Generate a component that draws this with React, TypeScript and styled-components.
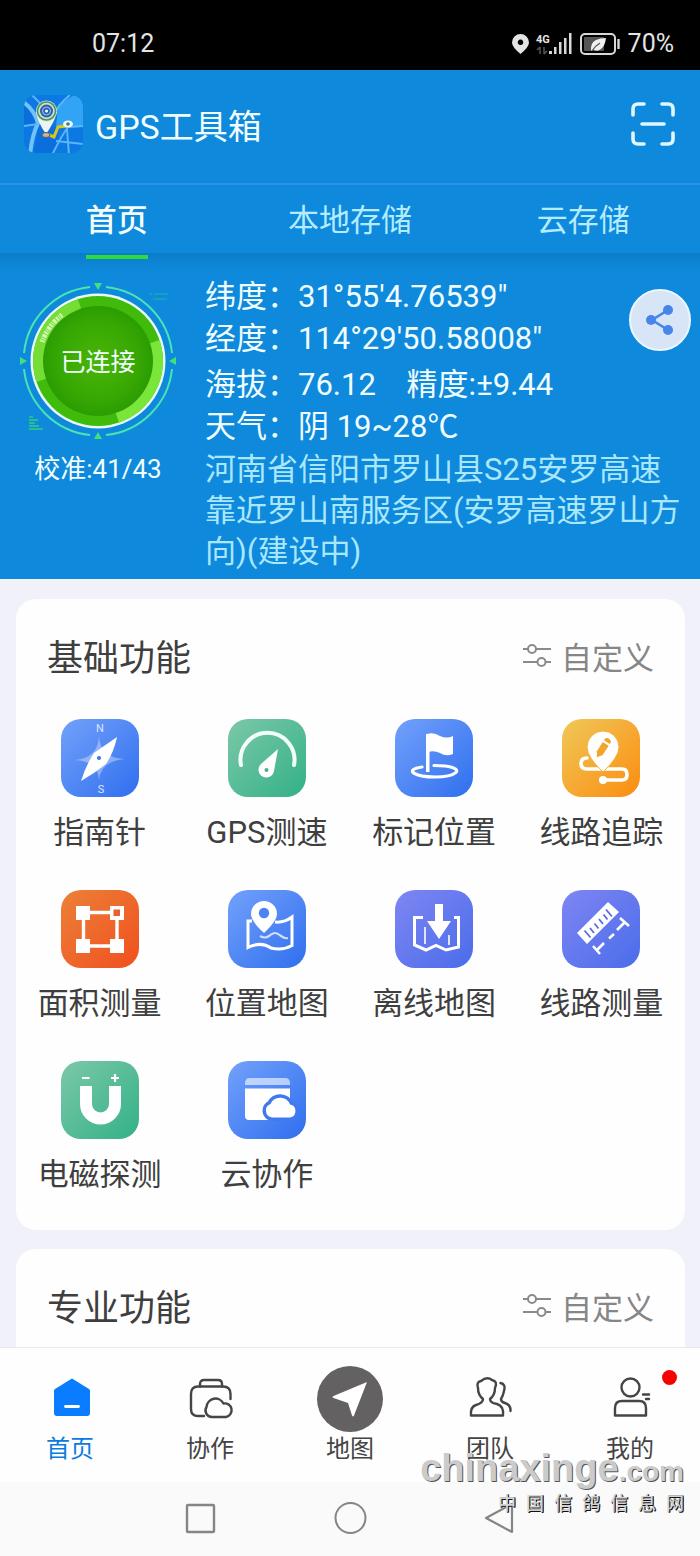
import React from "react";
import styled, { createGlobalStyle } from "styled-components";

const GlobalStyle = createGlobalStyle`
  * { box-sizing: border-box; }
  body {
    margin: 0;
    background: #f1f2f9;
    font-family: Roboto, "Noto Sans CJK SC", sans-serif;
    color: #3f3f3f;
  }
  button {
    border: 0;
    padding: 0;
    background: none;
    font: inherit;
    color: inherit;
    cursor: pointer;
  }
  a { color: inherit; text-decoration: none; }
  svg { display: block; overflow: visible; }
`;

const Screen = styled.div`
  position: relative;
  display: flex;
  flex-direction: column;
  min-height: 100vh;
`;

/* ---------- status bar ---------- */

const StatusBar = styled.div`
  display: flex;
  align-items: center;
  justify-content: space-between;
  height: 70px;
  padding: 18px 26px 0 92px;
  background: #000;
  color: #e4e4e4;
  font-size: 25px;
  line-height: 32px;
`;

const StatusIcons = styled.div`
  display: flex;
  align-items: center;
  gap: 8px;
`;

/* ---------- header ---------- */

const Header = styled.header`
  display: flex;
  align-items: center;
  gap: 12px;
  height: 115px;
  padding: 0 25px 6px 24px;
  background: #0e89db;
  border-bottom: 2px solid #2a93e4;
  color: #f0fdff;
`;

const AppTitle = styled.h1`
  flex: 1;
  margin: 0;
  padding-top: 6px;
  font-size: 34px;
  font-weight: 400;
  line-height: 44px;
`;

const Tabs = styled.nav`
  position: relative;
  display: grid;
  grid-template-columns: repeat(3, 1fr);
  height: 68px;
  background: #0e89db;
`;

const Tab = styled.a<{ $active?: boolean }>`
  position: relative;
  justify-self: center;
  padding-top: 14px;
  font-size: 31px;
  line-height: 44px;
  font-weight: ${(p) => (p.$active ? 500 : 400)};
  color: ${(p) => (p.$active ? "#f2feff" : "#b4ecff")};
  &::after {
    content: "";
    display: ${(p) => (p.$active ? "block" : "none")};
    position: absolute;
    left: 0;
    right: 0;
    bottom: -6px;
    height: 4px;
    background: #2edb3c;
  }
`;

/* ---------- position panel ---------- */

const Position = styled.section`
  display: flex;
  gap: 9px;
  padding-bottom: 7px;
  background: linear-gradient(#0a7dc9, #0e87d8 14px, #0e89db 22px);
  color: #f0fdff;
`;

const Connection = styled.div`
  display: flex;
  flex: none;
  flex-direction: column;
  align-items: center;
  gap: 12px;
  width: 196px;
  padding-top: 28px;
  font-size: 26px;
  line-height: 32px;
`;

const GaugeButton = styled.button`
  display: grid;
  place-items: center;
  > * { grid-area: 1 / 1; }
`;

const GaugeLabel = styled.span`
  padding-top: 4px;
  font-size: 25px;
`;

const Readings = styled.div`
  flex: 1;
  padding-top: 23px;
  font-size: 31px;
`;

const ReadingsTop = styled.div`
  display: flex;
  align-items: flex-start;
  justify-content: space-between;
  padding-right: 9px;
`;

const ReadingList = styled.dl`
  display: flex;
  flex-direction: column;
  margin: 0;
`;

const Reading = styled.div<{ $spaced?: boolean }>`
  display: flex;
  margin-top: ${(p) => (p.$spaced ? 4 : 0)}px;
  line-height: 42px;
  white-space: pre;
  dt, dd { margin: 0; }
`;

const ShareButton = styled.button`
  display: grid;
  place-items: center;
  width: 62px;
  height: 62px;
  margin-top: 13px;
  border: 2px solid #eaf7ff;
  border-radius: 50%;
  background: #d7e5f6;
`;

const Address = styled.p`
  margin: 1px 14px 0 0;
  line-height: 41px;
  color: #a9e7fd;
`;

/* ---------- feature cards ---------- */

const Main = styled.main`
  display: flex;
  flex: 1;
  flex-direction: column;
  gap: 19px;
  padding: 20px 15px 0 16px;
`;

const Card = styled.section<{ $last?: boolean }>`
  flex: ${(p) => (p.$last ? 1 : "none")};
  padding: 38px 0 ${(p) => (p.$last ? 15 : 34)}px;
  border-radius: ${(p) => (p.$last ? "20px 20px 0 0" : "20px")};
  background: #fefefe;
`;

const CardHead = styled.div`
  display: flex;
  align-items: center;
  justify-content: space-between;
  padding: 0 31px;
`;

const CardTitle = styled.h2`
  margin: 0;
  font-size: 36px;
  font-weight: 400;
  line-height: 44px;
`;

const Customize = styled.button`
  display: flex;
  align-items: center;
  gap: 10px;
  font-size: 31px;
  line-height: 44px;
  color: #868686;
  svg { margin-bottom: 8px; }
`;

const FeatureGrid = styled.div`
  display: grid;
  grid-template-columns: repeat(4, 1fr);
  row-gap: 36px;
  margin-top: 38px;
`;

const Feature = styled.a`
  display: flex;
  flex-direction: column;
  align-items: center;
  gap: 14px;
  font-size: 31px;
  line-height: 43px;
  white-space: nowrap;
`;

const Tile = styled.span<{ $from: string; $to: string }>`
  width: 78px;
  height: 78px;
  border-radius: 20px;
  background: linear-gradient(135deg, ${(p) => p.$from}, ${(p) => p.$to});
`;

/* ---------- bottom bars ---------- */

const BottomNav = styled.nav`
  display: grid;
  grid-template-columns: repeat(5, 1fr);
  padding: 18px 0 16px;
  border-top: 1px solid #e9e9ea;
  background: #fefefe;
`;

const NavItem = styled.a<{ $active?: boolean }>`
  position: relative;
  display: flex;
  flex-direction: column;
  align-items: center;
  font-size: 24px;
  line-height: 34px;
  color: ${(p) => (p.$active ? "#0a7be0" : "#444")};
`;

const NavIcon = styled.span`
  display: grid;
  place-items: center;
  height: 66px;
`;

const Dot = styled.span`
  position: absolute;
  top: 4px;
  left: calc(50% + 32px);
  width: 15px;
  height: 15px;
  border-radius: 50%;
  background: #f80000;
`;

const SystemBar = styled.div`
  display: flex;
  align-items: center;
  justify-content: center;
  gap: 118px;
  height: 74px;
  padding-bottom: 2px;
  background: #fafafa;
  button { width: 32px; height: 32px; }
`;

const Watermark = styled.div`
  position: absolute;
  right: 16px;
  bottom: 40px;
  display: flex;
  flex-direction: column;
  align-items: flex-end;
  font-family: "Liberation Sans", "Noto Sans CJK SC", sans-serif;
  color: #cbcbcb;
  pointer-events: none;
`;

const SiteName = styled.span<{ $small?: boolean }>`
  font-size: ${(p) => (p.$small ? 28 : 38)}px;
  line-height: 40px;
  font-weight: 700;
  text-shadow: 1px 1px 0 #555;
`;

const SiteCaption = styled.span`
  font-size: 18px;
  line-height: 24px;
  font-weight: 500;
  white-space: pre;
  color: #d4d4d4;
  text-shadow: 1px 1px 0 #111, 1px 0 0 #333;
`;

/* ---------- drawings ---------- */

const AppLogo = () => (
  <svg width="59" height="58" viewBox="0 0 59 58" aria-hidden="true">
    <defs>
      <clipPath id="logoClip"><rect width="59" height="58" rx="12" /></clipPath>
    </defs>
    <g clipPath="url(#logoClip)">
      <rect width="59" height="58" fill="#0b78e4" />
      <path d="M34 10 L50 0 H59 V32 L32 33Z" fill="#31a4f6" />
      <path d="M0 6 L15 30 L10 58 H30 L36 32 L0 30Z" fill="#0a6fdc" />
      <path d="M-2 6 Q10 14 14 28 Q8 40 6 60" stroke="#72c2f8" strokeWidth="4" fill="none" />
      <path d="M8 0 L16 8 M46 0 Q36 8 32 16 M0 31 L14 29 M60 31 L44 32 Q38 40 28 60 M43 34 L45 60 M32 46 L60 49" stroke="#5db5f6" strokeWidth="2" fill="none" />
      <path d="M23 39 L30 42 L34 32 L43 31" stroke="#d8c51e" strokeWidth="3" fill="none" />
    </g>
    <path d="M12 17 Q14 28 22 39 Q30 28 33 17Z" fill="#eef4f4" />
    <circle cx="22.500" cy="16" r="10.500" fill="#cfe3c4" />
    <circle cx="22.500" cy="16" r="9" fill="none" stroke="#4a8f5c" strokeWidth="1.500" />
    <circle cx="22.500" cy="16" r="6.500" fill="#2a62b4" />
    <circle cx="22.500" cy="16" r="4" fill="none" stroke="#a8c8ee" strokeWidth="1" />
    <circle cx="22.500" cy="16" r="1.500" fill="#fff" />
    <ellipse cx="22" cy="40" rx="4" ry="2.500" fill="#b9b7ae" stroke="#605a58" />
    <ellipse cx="44" cy="29" rx="5" ry="3.500" fill="#eef6f6" />
    <circle cx="44" cy="29" r="1.800" fill="#3c7a84" />
  </svg>
);

const ScanIcon = () => (
  <svg width="44" height="44" viewBox="0 0 44 44" fill="none" stroke="#dff8ff" strokeWidth="3.600" strokeLinecap="round" aria-hidden="true">
    <path d="M2 13V7q0-5 5-5h6M31 2h6q5 0 5 5v6M42 31v6q0 5-5 5h-6M13 42H7q-5 0-5-5v-6M11 22h22" />
  </svg>
);

const Gauge = () => (
  <svg width="160" height="160" viewBox="-80 -80 160 160" aria-hidden="true">
    <defs>
      <radialGradient id="core">
        <stop offset="0" stopColor="#4ab507" />
        <stop offset="0.700" stopColor="#37a803" />
        <stop offset="1" stopColor="#2b9d02" />
      </radialGradient>
    </defs>
    <g fill="none" stroke="#4be3b4" strokeWidth="2">
      <path d="M8 -74A74 74 0 0 1 74 -8M74 8A74 74 0 0 1 8 74M-8 74A74 74 0 0 1 -74 8M-74 -8A74 74 0 0 1 -8 -74" />
    </g>
    <path d="M-4 -78h8l-4 7zM-4 78h8l-4 -7zM-78 -4v8l7 -4zM78 -4v8l-7 -4z" fill="#42e07c" />
    <circle r="67.500" fill="#e6fbf6" />
    <circle cy="0" r="65" fill="#40bb0c" />
    <path d="M-20 -61.800A65 65 0 0 0 -61.500 21L-50 17A53 53 0 0 1 -16 -50Z" fill="#75dd35" />
    <path d="M61.500 -21A65 65 0 0 1 21 61.500L17 50A53 53 0 0 0 50 -17Z" fill="#7ae63a" />
    <circle r="55" fill="url(#core)" />
    <path d="M-56 -19A59 59 0 0 1 -36 -46" fill="none" stroke="#d3f7b4" strokeWidth="5" strokeDasharray="2 1 1 1 3 1" />
    <g stroke="#21b79c" strokeWidth="1">
      <path d="M51 -67h3m2 0h14M55 -62h14M-69 59h9M-69 62h5M-69 65h10M-69 68h9" />
    </g>
    <path d="M-69 56h4M-69 59h9M-69 62h6M-69 65h10M-69 68h14" stroke="#2cc88a" strokeWidth="1.400" />
  </svg>
);

const ShareIcon = () => (
  <svg width="28" height="30" viewBox="0 0 28 30" fill="#4786e8" stroke="#4786e8" strokeWidth="2.600" aria-hidden="true">
    <path d="M22 5L6 15l16 10" fill="none" />
    <g stroke="none">
      <circle cx="22" cy="5" r="5" />
      <circle cx="5" cy="15" r="5" />
      <circle cx="22" cy="25" r="5" />
    </g>
  </svg>
);

const SlidersIcon = () => (
  <svg width="28" height="22" viewBox="0 0 28 22" fill="none" stroke="#8a8a8a" strokeWidth="2" aria-hidden="true">
    <path d="M0 5h5M13 5h15M0 18h14M23 18h5" />
    <circle cx="9" cy="5" r="4" />
    <circle cx="18.500" cy="18" r="4" />
  </svg>
);

const glyphs = {
  compass: (
    <>
      <path d="M38 17Q39 39 64 40Q39 42 38 62Q37 42 14 41Q37 39 38 17Z" fill="#fff" opacity="0.350" />
      <path d="M56 18Q53 33 45 45Q34 54 20 62Q25 46 33 34Q43 27 56 18Z" fill="#fff" />
      <circle cx="38" cy="39" r="2" fill="#3a74e0" />
      <g fill="#dbe8ff" fontSize="11" textAnchor="middle">
        <text x="39" y="13">N</text>
        <text x="40" y="74">S</text>
      </g>
    </>
  ),
  speed: (
    <>
      <path d="M13 46A27 27 0 1 1 66 46" fill="none" stroke="#f3fffa" strokeWidth="4" strokeLinecap="round" />
      <path d="M50 30L46 52A7.800 7.800 0 1 1 33 45Z" fill="#fff" />
      <circle cx="38.500" cy="51" r="2" fill="#43b28f" />
    </>
  ),
  flag: (
    <>
      <path d="M27 48C8 51 20 58 40 58S72 50 50 47L39 46.500" fill="none" stroke="#fff" strokeWidth="3.200" strokeLinecap="round" />
      <path d="M31 15h3.500v38H31z" fill="#fff" />
      <path d="M32 15Q39 13 45 17Q52 20 58 17V35Q51 38 45 34Q39 31 33 33Z" fill="#fff" />
    </>
  ),
  route: (
    <>
      <path d="M25 39Q19 39 19 44.500T25 50H60Q65 50 65 55.500T60 61H42" fill="none" stroke="#fff" strokeWidth="3.600" strokeLinecap="round" />
      <circle cx="41" cy="61" r="4" fill="#fff" />
      <path d="M41 53Q25 38 25 28A16 16 0 0 1 57 28Q57 38 41 53Z" fill="#fff" stroke="#f6b030" strokeWidth="1" />
      <g transform="translate(41 29) rotate(33)" fill="#f0a52d">
        <path d="M-3.500 -5h7v11l-3.500 5l-3.500 -5z" />
        <path d="M-3.500 -7v-1q0 -3 3.500 -3t3.500 3v1z" />
      </g>
    </>
  ),
  area: (
    <>
      <path d="M22.500 22.500H56V56H22.500Z" fill="none" stroke="#fff" strokeWidth="3.400" />
      <path d="M15 16h14v14H15zM49 16h14v14H49zM15 49h14v14H15zM49 49h14v14H49z" fill="#fff" />
      <path d="M52.500 19.500h6.500v6.500h-6.500z" fill="#e8632c" />
    </>
  ),
  map: (
    <>
      <path d="M24 31H20V57.500Q33 51 43 58Q54 61 64 55.500V27Q56 33 47 32" fill="none" stroke="#fff" strokeWidth="3" />
      <path d="M32 46Q37 49 41 46T47 43T53 46T60 48" fill="none" stroke="#fff" strokeWidth="2.200" opacity="0.750" />
      <path d="M36 43Q23 31 23 24A13 13 0 0 1 49 24Q49 31 36 43Z" fill="#fff" />
      <circle cx="36" cy="23" r="5.200" fill="#4c83f4" />
    </>
  ),
  offline: (
    <>
      <path d="M28 27.500H19.500V55L31 60L41 55.500L51 60L63.500 57V27.500H59" fill="none" stroke="#fff" strokeWidth="3" />
      <path d="M30 37V54M54 45V55" stroke="#fff" strokeWidth="1.600" />
      <path d="M40 14h8v17h8L44 49L32 31h8z" fill="#fff" />
    </>
  ),
  ruler: (
    <>
      <path d="M46 12L57 22L25 54L15 43Z" fill="#fff" />
      <path d="M22.500 40.500l6 7M28 38l4 5M32.500 33.500l4 5M37 29l4 5M41.500 24.500l4 5M44 19.500l6 7" stroke="#5a69e2" strokeWidth="1.800" />
      <path d="M35 60L42 53M47 48.500L52 44M55 40L62 33M58 28L67 36M31 56L38 64" stroke="#fff" strokeWidth="2.600" />
    </>
  ),
  magnet: (
    <>
      <path d="M25 25V43A14.500 14.500 0 0 0 54 43V25" fill="none" stroke="#fff" strokeWidth="12" />
      <path d="M21 17h7.500M50 17h8M54 13v8" stroke="#fff" strokeWidth="2.200" />
    </>
  ),
  cloud: (
    <>
      <path d="M17 24v-2q0-5 5-5h35q5 0 5 5v2z" fill="#fff" opacity="0.600" />
      <path d="M17 27.500H62V59H21Q17 59 17 55Z" fill="#fff" />
      <path d="M44 56.500a7 7 0 0 1 -1.500 -13.500a10.500 10.500 0 0 1 19.500 0.500a6.600 6.600 0 0 1 0 13z" fill="#fff" stroke="#4079f0" strokeWidth="7" />
      <path d="M44 56.500a7 7 0 0 1 -1.500 -13.500a10.500 10.500 0 0 1 19.500 0.500a6.600 6.600 0 0 1 0 13z" fill="#fff" />
    </>
  ),
};

const palettes = {
  blue: ["#73a1fb", "#2f6fee"],
  green: ["#7cc8a8", "#33b187"],
  yellow: ["#f0c858", "#fb8c10"],
  orange: ["#ec8038", "#f0501f"],
  violet: ["#7f86f3", "#4a6cea"],
};

const features: { label: string; glyph: keyof typeof glyphs; palette: keyof typeof palettes }[] = [
  { label: "指南针", glyph: "compass", palette: "blue" },
  { label: "GPS测速", glyph: "speed", palette: "green" },
  { label: "标记位置", glyph: "flag", palette: "blue" },
  { label: "线路追踪", glyph: "route", palette: "yellow" },
  { label: "面积测量", glyph: "area", palette: "orange" },
  { label: "位置地图", glyph: "map", palette: "blue" },
  { label: "离线地图", glyph: "offline", palette: "violet" },
  { label: "线路测量", glyph: "ruler", palette: "violet" },
  { label: "电磁探测", glyph: "magnet", palette: "green" },
  { label: "云协作", glyph: "cloud", palette: "blue" },
];

const LineIcon = ({ children }: { children: React.ReactNode }) => (
  <svg width="44" height="44" viewBox="0 0 44 44" fill="none" stroke="#454545" strokeWidth="2.400" strokeLinecap="round" strokeLinejoin="round" aria-hidden="true">
    {children}
  </svg>
);

const navItems: { label: string; icon: React.ReactNode; active?: boolean; dot?: boolean }[] = [
  {
    label: "首页",
    active: true,
    icon: (
      <LineIcon>
        <path d="M24 1.500L41 12q1 1 1 2V36q0 3 -3 3H9q-3 0 -3 -3V14q0 -1 1 -2Z" fill="#0a7cff" stroke="none" />
        <path d="M17.500 29.500h13" stroke="#fff" strokeWidth="2.800" />
      </LineIcon>
    ),
  },
  {
    label: "协作",
    icon: (
      <LineIcon>
        <path d="M12 9.500V7q0-4 4-4h14q4 0 4 4v2.500" />
        <path d="M16 39H10q-7 0-7-7V17q0-7.500 7-7.500h25q7.500 0 7.500 7.500v5" />
        <path d="M24 40a6.500 6.500 0 0 1 -5.500 -10a9 9 0 0 1 17 -3.500a6.800 6.800 0 1 1 2.500 13.500z" />
      </LineIcon>
    ),
  },
  {
    label: "地图",
    icon: (
      <svg width="66" height="66" viewBox="0 0 66 66" aria-hidden="true">
        <circle cx="33" cy="33" r="33" fill="#636162" />
        <path d="M50 16L37 49.500q-1 2 -2 0L31 37L16.500 32q-2 -1 0 -2Z" fill="#fff" />
      </svg>
    ),
  },
  {
    label: "团队",
    icon: (
      <LineIcon>
        <path d="M3 38.500H35Q36 29 29 27Q22 26 22 22Q27 18 27 11Q30 4 24 3Q19 -1 13 4Q8 5 10 11Q10 18 15 22Q15 26 8 28Q2 30 3 38.500Z" />
        <path d="M32.500 6Q38 7 36 14Q35 19 33 22Q33 25 37 26Q43 28 42.500 34" />
      </LineIcon>
    ),
  },
  {
    label: "我的",
    dot: true,
    icon: (
      <LineIcon>
        <circle cx="22.500" cy="10.500" r="9" />
        <path d="M7 38.500V31q0-7 7-7h17q7 0 7 7v7.500z" />
        <path d="M35 17.500h6M38 22h3" />
      </LineIcon>
    ),
  },
];

const SectionHead = ({ title }: { title: string }) => (
  <CardHead>
    <CardTitle>{title}</CardTitle>
    <Customize type="button">
      <SlidersIcon />
      自定义
    </Customize>
  </CardHead>
);

export default function App() {
  return (
    <Screen>
      <GlobalStyle />
      <StatusBar>
        <span>07:12</span>
        <StatusIcons>
          <svg width="17" height="20" viewBox="0 0 17 20" aria-hidden="true">
            <path d="M8.500 20Q0 13 0 8.500A8.500 8.500 0 0 1 17 8.500Q17 13 8.500 20ZM8.500 5.500a2.800 2.800 0 1 0 .01 0Z" fill="#e4e4e4" fillRule="evenodd" />
          </svg>
          <svg width="35" height="22" viewBox="0 0 35 22" aria-hidden="true">
            <text x="-1" y="9.500" fontSize="11" fontWeight="700" fill="#e4e4e4">4G</text>
            <path d="M3 14v7M0 17l3-3M7 14v7M10 18l-3 3" stroke="#555" strokeWidth="1.500" fill="none" />
            <path d="M12 18h3v3h-3zM17 14h2.500v7H17zM22 9h2.500v12H22zM27 5h2.500v16H27zM32 0h2.500v21H32z" fill="#d8d8d8" />
          </svg>
          <svg width="40" height="22" viewBox="0 0 40 22" aria-hidden="true">
            <rect x="1" y="1" width="34" height="20" rx="4" fill="none" stroke="#d8d8d8" strokeWidth="2" />
            <rect x="4" y="4" width="20" height="14" rx="1" fill="#555" />
            <path d="M11 18Q10 10 16 7Q20 5 26 5Q25 13 21 16Q17 19 13 16.500Z" fill="#f0f0f0" />
            <path d="M12 18Q15 13 20 10" stroke="#555" strokeWidth="1.200" fill="none" />
            <path d="M38.500 6v10" stroke="#d8d8d8" strokeWidth="2.400" />
          </svg>
          <span>70%</span>
        </StatusIcons>
      </StatusBar>

      <Header>
        <AppLogo />
        <AppTitle>GPS工具箱</AppTitle>
        <button type="button" aria-label="扫一扫"><ScanIcon /></button>
      </Header>

      <Tabs>
        <Tab href="#home" $active>首页</Tab>
        <Tab href="#local">本地存储</Tab>
        <Tab href="#cloud">云存储</Tab>
      </Tabs>

      <Position>
        <Connection>
          <GaugeButton type="button">
            <Gauge />
            <GaugeLabel>已连接</GaugeLabel>
          </GaugeButton>
          <span>校准:41/43</span>
        </Connection>
        <Readings>
          <ReadingsTop>
            <ReadingList>
              <Reading><dt>纬度：</dt><dd>31°55′4.76539″</dd></Reading>
              <Reading><dt>经度：</dt><dd>114°29′50.58008″</dd></Reading>
              <Reading $spaced><dt>海拔：</dt><dd>{"76.12    精度:±9.44"}</dd></Reading>
              <Reading><dt>天气：</dt><dd>阴 19~28℃</dd></Reading>
            </ReadingList>
            <ShareButton type="button" aria-label="分享"><ShareIcon /></ShareButton>
          </ReadingsTop>
          <Address>河南省信阳市罗山县S25安罗高速靠近罗山南服务区(安罗高速罗山方向)(建设中)</Address>
        </Readings>
      </Position>

      <Main>
        <Card>
          <SectionHead title="基础功能" />
          <FeatureGrid>
            {features.map((f) => (
              <Feature key={f.label} href="#feature">
                <Tile $from={palettes[f.palette][0]} $to={palettes[f.palette][1]}>
                  <svg width="78" height="78" viewBox="0 0 78 78" aria-hidden="true">{glyphs[f.glyph]}</svg>
                </Tile>
                {f.label}
              </Feature>
            ))}
          </FeatureGrid>
        </Card>
        <Card $last>
          <SectionHead title="专业功能" />
        </Card>
      </Main>

      <BottomNav>
        {navItems.map((item) => (
          <NavItem key={item.label} href="#nav" $active={item.active}>
            <NavIcon>{item.icon}</NavIcon>
            {item.label}
            {item.dot && <Dot />}
          </NavItem>
        ))}
      </BottomNav>

      <SystemBar>
        <button type="button" aria-label="最近任务">
          <svg width="32" height="32" fill="none" stroke="#858585" strokeWidth="2.400"><rect x="3" y="3" width="27" height="27" rx="1" /></svg>
        </button>
        <button type="button" aria-label="主屏幕">
          <svg width="32" height="32" fill="none" stroke="#858585" strokeWidth="2"><circle cx="16.500" cy="16" r="15" /></svg>
        </button>
        <button type="button" aria-label="返回">
          <svg width="32" height="32" fill="none" stroke="#858585" strokeWidth="2.200" strokeLinejoin="round"><path d="M2 16L28 2v28z" /></svg>
        </button>
      </SystemBar>

      <Watermark>
        <span>
          <SiteName>chinaxinge</SiteName>
          <SiteName $small>.com</SiteName>
        </span>
        <SiteCaption>{"中  国  信  鸽  信  息  网"}</SiteCaption>
      </Watermark>
    </Screen>
  );
}
